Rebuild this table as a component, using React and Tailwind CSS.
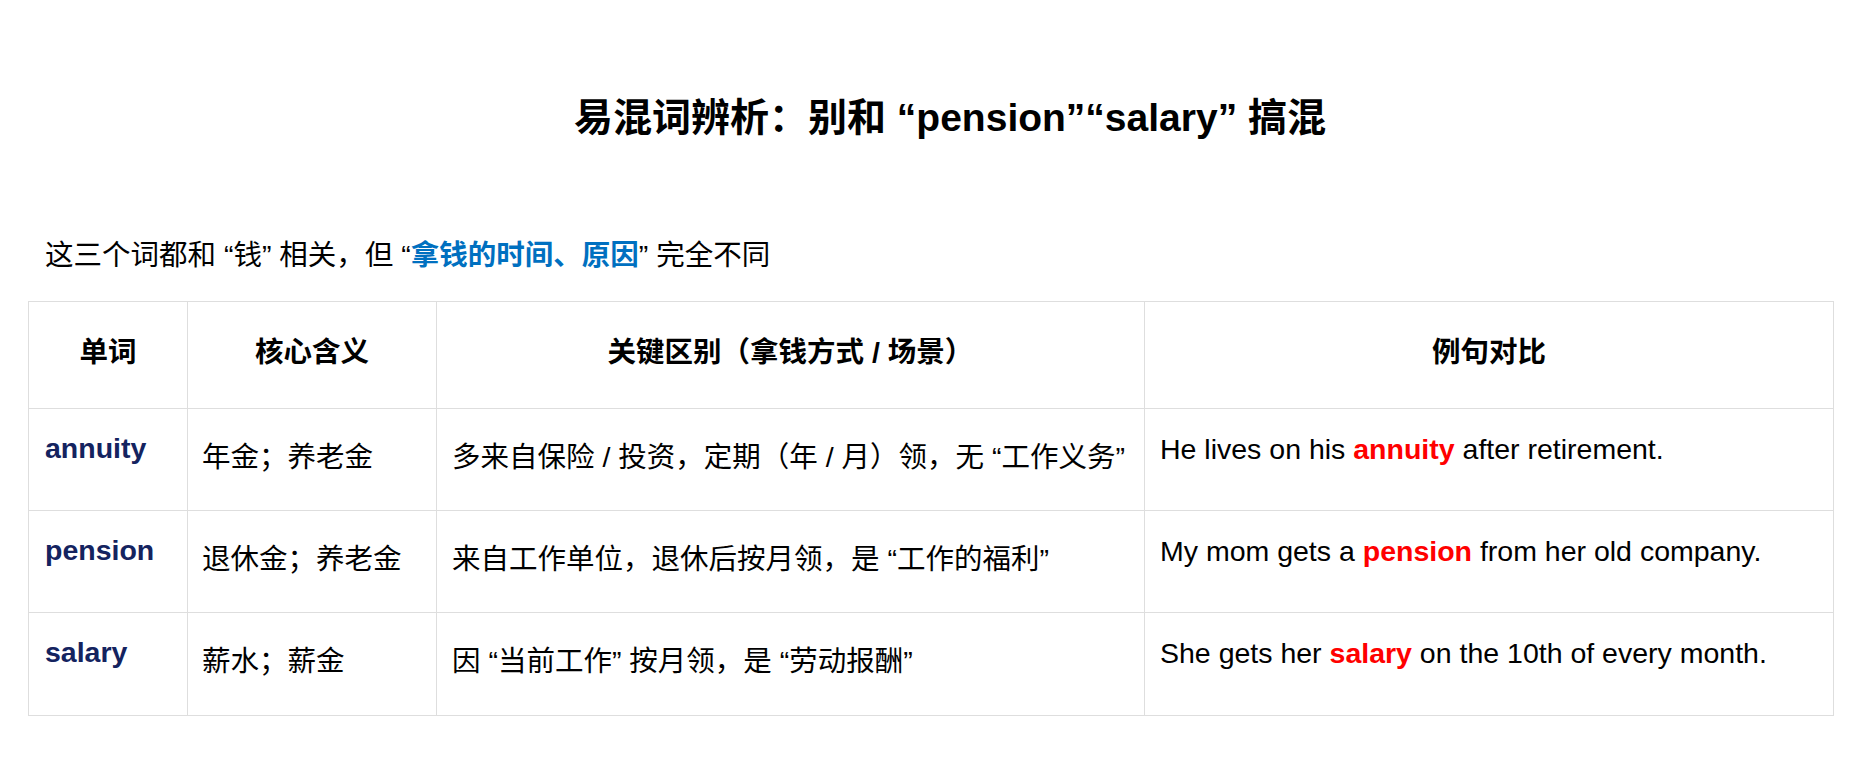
import React from "react";

const FONT = { fontFamily: '"Liberation Sans", Arial, "Noto Sans CJK SC", sans-serif' };

const rows = [
  {
    word: "annuity",
    meaning: "年金；养老金",
    diff: "多来自保险 / 投资，定期（年 / 月）领，无 “工作义务”",
    pre: "He lives on his ",
    hl: "annuity",
    post: " after retirement.",
    h: "h-[102px]",
  },
  {
    word: "pension",
    meaning: "退休金；养老金",
    diff: "来自工作单位，退休后按月领，是 “工作的福利”",
    pre: "My mom gets a ",
    hl: "pension",
    post: " from her old company.",
    h: "h-[102px]",
  },
  {
    word: "salary",
    meaning: "薪水；薪金",
    diff: "因 “当前工作” 按月领，是 “劳动报酬”",
    pre: "She gets her ",
    hl: "salary",
    post: " on the 10th of every month.",
    h: "h-[103px]",
  },
];

export default function App() {
  return (
    <div className="w-[1866px] h-[784px] bg-white text-black overflow-hidden" style={FONT}>
      <h1 className="pt-[86px] pl-[34px] text-center text-[39px] font-bold leading-[normal]">
        易混词辨析：别和 “pension”“salary” 搞混
      </h1>
      <p className="mt-[90px] pl-[45px] text-[28.5px] leading-[normal]">
        这三个词都和 “钱” 相关，但 “<span className="font-bold text-[#0070c0]">拿钱的时间、原因</span>” 完全不同
      </p>
      <div className="mt-[28px] ml-[28px] w-[1806px] grid grid-cols-[159px_249px_708px_689px] border-t border-l border-[#dedede] text-[28.5px] leading-[normal]">
        {["单词", "核心含义", "关键区别（拿钱方式 / 场景）", "例句对比"].map((t) => (
          <div key={t} className="h-[107px] border-r border-b border-[#dedede] pt-[27px] text-center font-bold whitespace-nowrap">
            {t}
          </div>
        ))}
        {rows.map((r) => (
          <React.Fragment key={r.word}>
            <div className={`${r.h} border-r border-b border-[#dedede] pt-[23px] pl-[16px] font-bold text-[#14235f]`}>
              {r.word}
            </div>
            <div className={`${r.h} border-r border-b border-[#dedede] pt-[25px] pl-[14px] whitespace-nowrap`}>{r.meaning}</div>
            <div className={`${r.h} border-r border-b border-[#dedede] pt-[25px] pl-[15px] whitespace-nowrap`}>{r.diff}</div>
            <div className={`${r.h} border-r border-b border-[#dedede] pt-[24px] pl-[15px] whitespace-nowrap`}>
              {r.pre}
              <span className="font-bold text-[#ff0000]">{r.hl}</span>
              {r.post}
            </div>
          </React.Fragment>
        ))}
      </div>
    </div>
  );
}
